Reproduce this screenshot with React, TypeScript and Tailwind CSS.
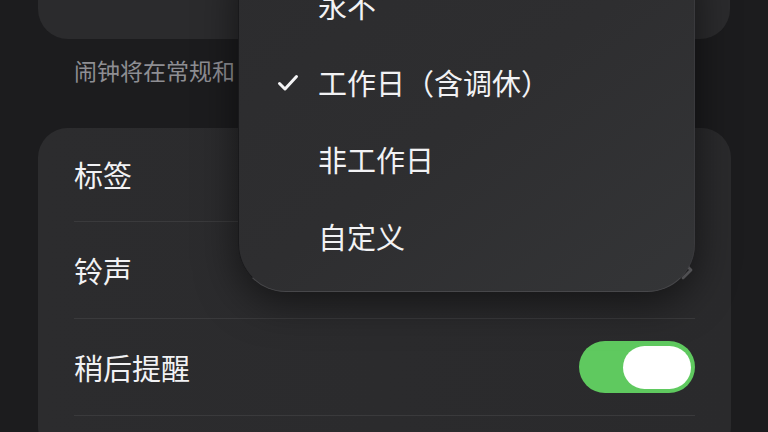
import React from 'react';

const font = { fontFamily: '"Noto Sans CJK SC", "Noto Sans", sans-serif' };

function Row({ label, h, children, divider = true }: { label: string; h: string; children?: React.ReactNode; divider?: boolean }) {
    return (
        <div className={`${h} flex items-center justify-between ${divider ? 'border-b-[1.5px] border-[#3a3a3c]' : ''}`}>
            <span className="text-[29px] text-[#f2f2f4] leading-none">{label}</span>
            {children}
        </div>
    );
}

export default function App() {
    const options = ['永不', '工作日（含调休）', '非工作日', '自定义'];

    return (
        <div className="relative w-[768px] h-[432px] overflow-hidden bg-[#1c1c1e]" style={font}>
            {/* top card, mostly scrolled away */}
            <div className="mx-[38px] -mt-[61px] h-[100px] rounded-[30px] bg-[#2b2b2d]"></div>

            <div className="mt-[16px] pl-[74px] text-[23px] leading-[30px] text-[#8e8e93]">
                闹钟将在常规和
            </div>

            <div className="mt-[43px] ml-[38px] mr-[37px] rounded-[30px] bg-gradient-to-r from-[#2c2c2e] to-[#2a2a2c] px-[36px]">
                <Row label="标签" h="h-[94px]" />
                <Row label="铃声" h="h-[97px]">
                    <svg width="14" height="22" viewBox="0 0 14 22" className="mr-[1px]">
                        <polyline points="3,3 11,11 3,19" fill="none" stroke="#6c6c70" strokeWidth="2.8" strokeLinecap="round" strokeLinejoin="round" />
                    </svg>
                </Row>
                <Row label="稍后提醒" h="h-[97px]">
                    <div className="w-[116px] h-[52px] rounded-full bg-[#5fc95f] flex items-center justify-end pr-[4px]">
                        <div className="w-[68px] h-[43px] rounded-full bg-white"></div>
                    </div>
                </Row>
                <div className="h-[40px]"></div>
            </div>

            {/* repeat menu popup */}
            <div className="absolute left-[238px] top-[-60px] w-[457px] h-[352px] rounded-[48px] bg-gradient-to-br from-[#2c2c2e] via-[#2e2e30] to-[#343537] border border-l-[#19191b] border-t-[#19191b] border-r-[#3a3a3d] border-b-[#47474a] shadow-[0_10px_40px_rgba(0,0,0,0.55)] pt-[26px]">
                {options.map((o, i) => (
                    <div key={o} className="h-[77px] flex items-center">
                        <div className="w-[79px] flex justify-end pr-[19px]">
                            {i === 1 && (
                                <svg width="22" height="18" viewBox="0 0 22 18">
                                    <polyline points="2.5,9.5 8,15 19.5,2.5" fill="none" stroke="#f4f4f6" strokeWidth="3" strokeLinecap="round" strokeLinejoin="round" />
                                </svg>
                            )}
                        </div>
                        <span className="text-[29px] leading-none text-[#f2f2f4]">{o}</span>
                    </div>
                ))}
            </div>
        </div>
    );
}
